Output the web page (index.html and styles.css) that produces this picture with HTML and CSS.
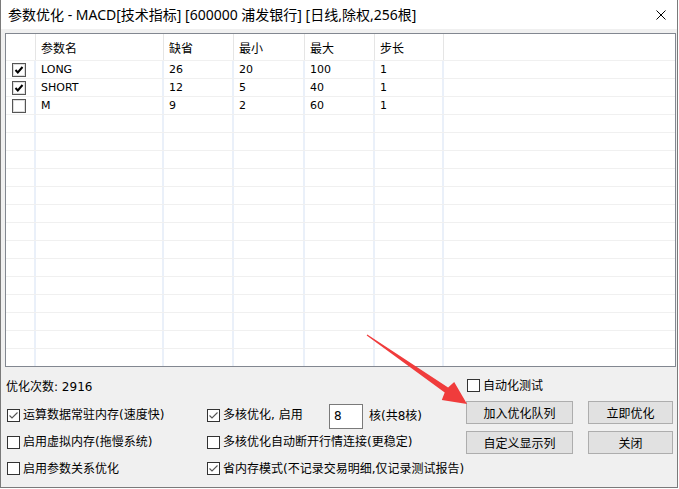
FILE: index.html
```html
<!DOCTYPE html>
<html>
<head>
<meta charset="utf-8">
<link rel="stylesheet" href="styles.css">
</head>
<body>
<svg width="0" height="0" class="defs">
  <defs>
    <symbol id="tcheck" viewBox="0 0 14 14">
      <rect x="0.5" y="0.5" width="13" height="13" fill="#fff" stroke="#555"/>
      <rect x="1.5" y="1.5" width="11" height="11" fill="none" stroke="#ddd"/>
      <path d="M3.5 7l2.3 2.4L10.5 4" fill="none" stroke="#000" stroke-width="2"/>
    </symbol>
    <symbol id="tempty" viewBox="0 0 14 14">
      <rect x="0.5" y="0.5" width="13" height="13" fill="#fff" stroke="#555"/>
      <rect x="1.5" y="1.5" width="11" height="11" fill="none" stroke="#ddd"/>
    </symbol>
    <symbol id="bcheck" viewBox="0 0 13 13">
      <rect x="0.5" y="0.5" width="12" height="12" fill="#fff" stroke="#333"/>
      <path d="M2.5 6.5l2.5 2.5 5.5-5.5" fill="none" stroke="#555" stroke-width="1.1"/>
    </symbol>
    <symbol id="bempty" viewBox="0 0 13 13">
      <rect x="0.5" y="0.5" width="12" height="12" fill="#fff" stroke="#333"/>
    </symbol>
  </defs>
</svg>
<div class="window">
  <div class="titlebar">
    <span class="title">参数优化 - MACD[技术指标] [600000 浦发银行] [日线,除权,256根]</span>
    <svg class="close" width="10" height="10" viewBox="0 0 10 10"><path d="M0.5 0.5L9.5 9.5M9.5 0.5L0.5 9.5" stroke="#000" stroke-width="1"/></svg>
  </div>
  <div class="client">
    <div class="list">
      <div class="lrow head">
        <div class="c c0"></div><div class="c">参数名</div><div class="c">缺省</div><div class="c">最小</div><div class="c">最大</div><div class="c">步长</div><div class="c"></div>
      </div>
      <div class="lrow">
        <div class="c c0"><svg class="tcb"><use href="#tcheck"/></svg></div><div class="c">LONG</div><div class="c">26</div><div class="c">20</div><div class="c">100</div><div class="c">1</div><div class="c"></div>
      </div>
      <div class="lrow">
        <div class="c c0"><svg class="tcb"><use href="#tcheck"/></svg></div><div class="c">SHORT</div><div class="c">12</div><div class="c">5</div><div class="c">40</div><div class="c">1</div><div class="c"></div>
      </div>
      <div class="lrow">
        <div class="c c0"><svg class="tcb"><use href="#tempty"/></svg></div><div class="c">M</div><div class="c">9</div><div class="c">2</div><div class="c">60</div><div class="c">1</div><div class="c"></div>
      </div>
      <div class="lrow"><div class="c c0"></div><div class="c"></div><div class="c"></div><div class="c"></div><div class="c"></div><div class="c"></div><div class="c"></div></div>
      <div class="lrow"><div class="c c0"></div><div class="c"></div><div class="c"></div><div class="c"></div><div class="c"></div><div class="c"></div><div class="c"></div></div>
      <div class="lrow"><div class="c c0"></div><div class="c"></div><div class="c"></div><div class="c"></div><div class="c"></div><div class="c"></div><div class="c"></div></div>
      <div class="lrow"><div class="c c0"></div><div class="c"></div><div class="c"></div><div class="c"></div><div class="c"></div><div class="c"></div><div class="c"></div></div>
      <div class="lrow"><div class="c c0"></div><div class="c"></div><div class="c"></div><div class="c"></div><div class="c"></div><div class="c"></div><div class="c"></div></div>
      <div class="lrow"><div class="c c0"></div><div class="c"></div><div class="c"></div><div class="c"></div><div class="c"></div><div class="c"></div><div class="c"></div></div>
      <div class="lrow"><div class="c c0"></div><div class="c"></div><div class="c"></div><div class="c"></div><div class="c"></div><div class="c"></div><div class="c"></div></div>
      <div class="lrow"><div class="c c0"></div><div class="c"></div><div class="c"></div><div class="c"></div><div class="c"></div><div class="c"></div><div class="c"></div></div>
      <div class="lrow"><div class="c c0"></div><div class="c"></div><div class="c"></div><div class="c"></div><div class="c"></div><div class="c"></div><div class="c"></div></div>
      <div class="lrow"><div class="c c0"></div><div class="c"></div><div class="c"></div><div class="c"></div><div class="c"></div><div class="c"></div><div class="c"></div></div>
      <div class="lrow"><div class="c c0"></div><div class="c"></div><div class="c"></div><div class="c"></div><div class="c"></div><div class="c"></div><div class="c"></div></div>
      <div class="lrow"><div class="c c0"></div><div class="c"></div><div class="c"></div><div class="c"></div><div class="c"></div><div class="c"></div><div class="c"></div></div>
      <div class="lrow"><div class="c c0"></div><div class="c"></div><div class="c"></div><div class="c"></div><div class="c"></div><div class="c"></div><div class="c"></div></div>
      <div class="lrow"><div class="c c0"></div><div class="c"></div><div class="c"></div><div class="c"></div><div class="c"></div><div class="c"></div><div class="c"></div></div>
    </div>
    <div class="bottom">
      <div class="stat">优化次数: 2916</div>
      <label class="chk autotest"><svg class="bcb"><use href="#bempty"/></svg>自动化测试</label>

      <label class="chk r1 ca"><svg class="bcb"><use href="#bcheck"/></svg>运算数据常驻内存(速度快)</label>
      <label class="chk r1 cb"><svg class="bcb"><use href="#bcheck"/></svg>多核优化, 启用</label>
      <div class="num r1">8</div>
      <div class="txt r1">核(共8核)</div>
      <button class="btn r1 be">加入优化队列</button>
      <button class="btn r1 bf btn-narrow">立即优化</button>

      <label class="chk r2 ca"><svg class="bcb"><use href="#bempty"/></svg>启用虚拟内存(拖慢系统)</label>
      <label class="chk r2 cbw"><svg class="bcb"><use href="#bempty"/></svg>多核优化自动断开行情连接(更稳定)</label>
      <button class="btn r2 be">自定义显示列</button>
      <button class="btn r2 bf btn-narrow">关闭</button>

      <label class="chk r3 ca"><svg class="bcb"><use href="#bempty"/></svg>启用参数关系优化</label>
      <label class="chk r3 cbw"><svg class="bcb"><use href="#bcheck"/></svg>省内存模式(不记录交易明细,仅记录测试报告)</label>
    </div>
  </div>
  <svg class="arrow" width="679" height="489" viewBox="0 0 679 489">
    <polygon points="367.3,334.4 448.1,387.4 454.2,381.9 467,404 441.8,400.1 444.7,392.4 366.7,335.6" fill="#f03c3c"/>
  </svg>
</div>
</body>
</html>
```

FILE: styles.css
```css
html, body {
  margin: 0;
  padding: 0;
  background: #fff;
}
.defs {
  position: absolute;
  width: 0;
  height: 0;
}
.window {
  position: relative;
  width: 676px;
  height: 487px;
  border: 1px solid #7a7a7a;
  border-top: none;
  background: #f0f0f0;
  display: flex;
  flex-direction: column;
}
.titlebar {
  height: 29px;
  flex: none;
  background: #fff;
  display: flex;
  align-items: center;
  justify-content: space-between;
}
.title {
  margin-left: 7px;
  font-family: "Noto Sans", "Noto Sans CJK SC", sans-serif;
  font-size: 14px;
  line-height: 17px;
  color: #000;
  white-space: nowrap;
}
.close {
  margin-right: 11px;
  flex: none;
}
.client {
  padding: 4px 1px 0 4px;
}
.list {
  height: 332px;
  border: 1px solid #828790;
  background: #fff;
  overflow: hidden;
}
.lrow {
  display: grid;
  grid-template-columns: 30px 128px 70px 71px 70px 69px 1fr;
  height: 18px;
  box-sizing: border-box;
  border-bottom: 1px solid #f0f0f0;
}
.lrow .c {
  border-right: 2px solid #eaf0f9;
  padding-left: 5px;
  font-family: "DejaVu Sans", sans-serif;
  font-size: 11px;
  line-height: 17px;
  color: #000;
  white-space: nowrap;
  overflow: hidden;
}
.lrow .c:last-child {
  border-right: none;
}
.lrow .c0 {
  padding-left: 6px;
  display: flex;
  align-items: center;
}
.lrow.head {
  height: 27px;
}
.lrow.head .c {
  border-right: 1px solid #e5e5e5;
  font-family: "Noto Sans CJK SC", sans-serif;
  font-size: 12px;
  line-height: 26px;
  padding-top: 1px;
  box-sizing: border-box;
}
.lrow.head .c:last-child {
  border-right: none;
}
.tcb {
  width: 14px;
  height: 14px;
  display: block;
}
.bottom {
  display: grid;
  grid-template-columns: 200px 122px 40px 97px 121px 85px;
  grid-template-rows: 34px 28px 26px 27px;
  padding-left: 2px;
  font-family: "DejaVu Sans", "Noto Sans CJK SC", sans-serif;
  font-size: 12px;
  color: #000;
}
.stat {
  grid-column: 1;
  grid-row: 1;
  align-self: center;
  margin-top: 6px;
  margin-left: -1px;
  line-height: 14px;
  white-space: nowrap;
}
.chk {
  display: flex;
  align-items: center;
  white-space: nowrap;
  line-height: 14px;
  align-self: center;
}
.bcb {
  width: 13px;
  height: 13px;
  margin-right: 3px;
  flex: none;
  display: block;
}
.autotest {
  grid-column: 5 / 7;
  grid-row: 1;
  margin-left: 1px;
  margin-top: 3px;
}
.r1 { grid-row: 2; }
.r2 { grid-row: 3; }
.r3 { grid-row: 4; }
.ca { grid-column: 1; }
.cb { grid-column: 2; }
.cbw { grid-column: 2 / 5; }
.num {
  grid-column: 3;
  align-self: start;
  margin-top: 3px;
  width: 34px;
  height: 25px;
  box-sizing: border-box;
  background: #fff;
  border: 1px solid #7a7a7a;
  padding: 4px 0 0 4px;
  line-height: 14px;
  font-family: "DejaVu Sans", sans-serif;
}
.txt {
  grid-column: 4;
  align-self: center;
  line-height: 14px;
  white-space: nowrap;
  margin-top: 2px;
}
.btn {
  align-self: start;
  width: 107px;
  height: 23px;
  box-sizing: border-box;
  background: #e1e1e1;
  border: 1px solid #adadad;
  border-radius: 0;
  padding: 0;
  margin: 0;
  font-family: "Noto Sans CJK SC", sans-serif;
  font-size: 12px;
  line-height: 20px;
  color: #000;
}
.r2.btn {
  margin-top: 2px;
}
.be { grid-column: 5; }
.bf { grid-column: 6; }
.btn-narrow {
  width: 85px;
  margin-left: 1px;
}
.arrow {
  position: absolute;
  left: -1px;
  top: 0;
  pointer-events: none;
}
```
